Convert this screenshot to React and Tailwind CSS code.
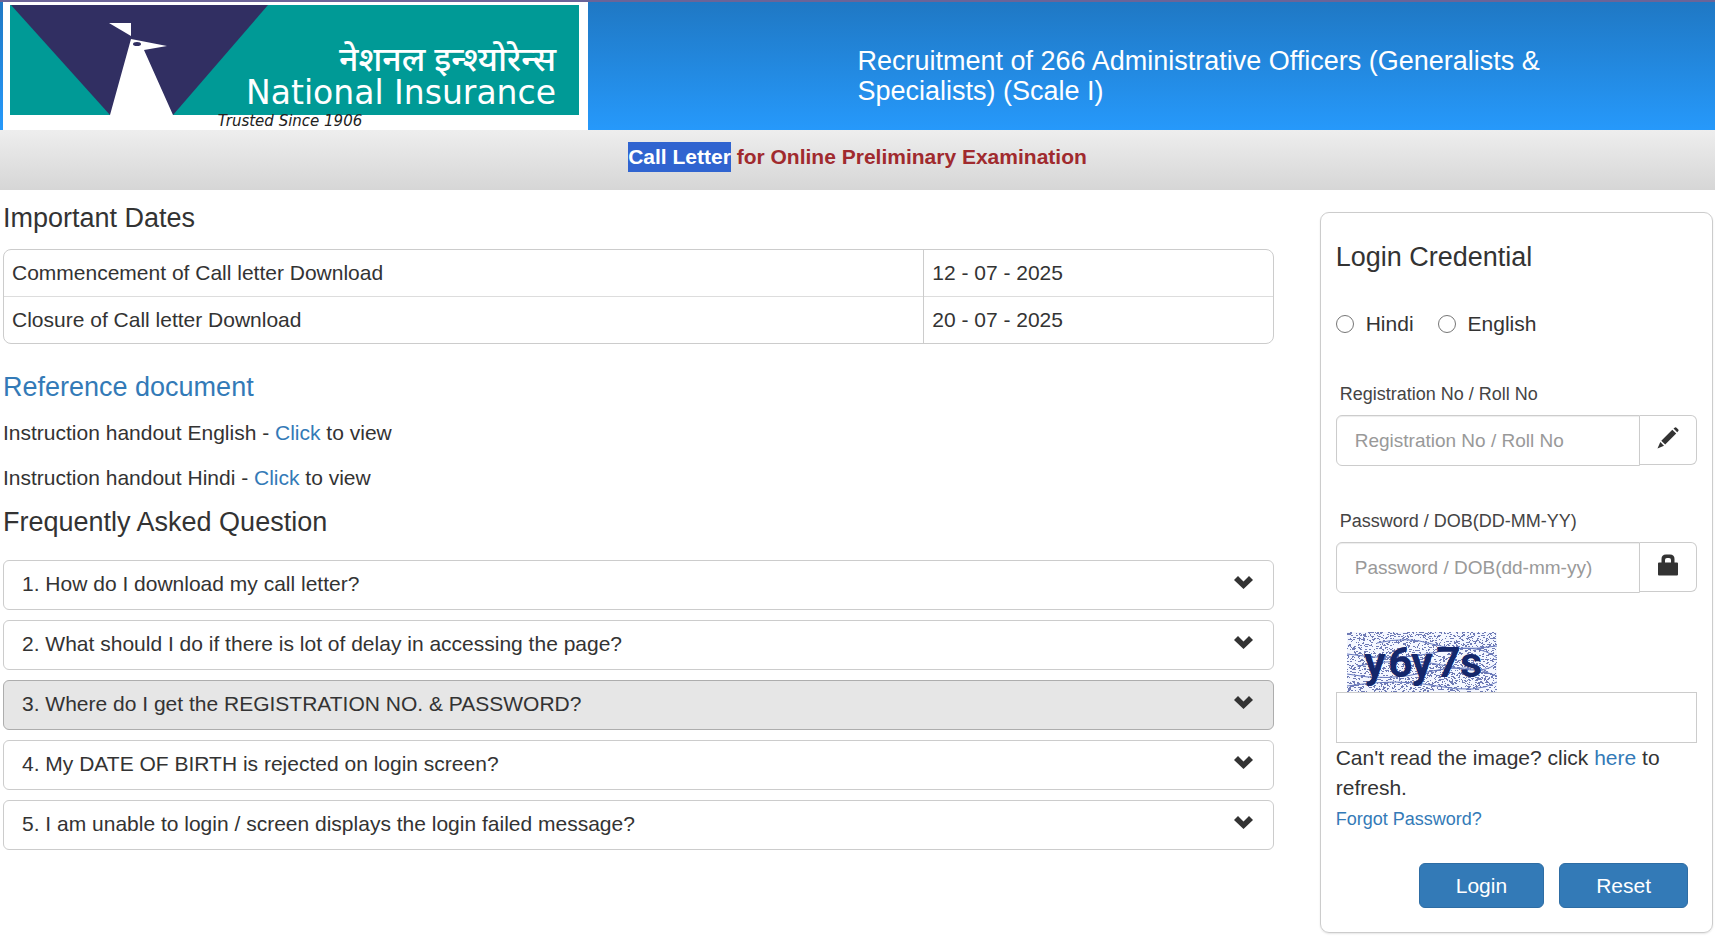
import React, { useState } from 'react';

const dates = [
  { label: 'Commencement of Call letter Download', value: '12 - 07 - 2025' },
  { label: 'Closure of Call letter Download', value: '20 - 07 - 2025' },
];

const handouts = ['English', 'Hindi'];

const questions = [
  'How do I download my call letter?',
  'What should I do if there is lot of delay in accessing the page?',
  'Where do I get the REGISTRATION NO. & PASSWORD?',
  'My DATE OF BIRTH is rejected on login screen?',
  'I am unable to login / screen displays the login failed message?',
];

// Speckles behind the captcha text, same pattern on every render
function makeSpeckles(count, width, height) {
  let seed = 7;
  const next = () => {
    seed = (seed * 16807) % 2147483647;
    return seed / 2147483647;
  };
  let d = '';
  for (let i = 0; i < count; i++) {
    const x = Math.floor(next() * width);
    const y = Math.floor(next() * height);
    const w = next() > 0.6 ? 2 : 1;
    d += `M${x} ${y}h${w}v1h-${w}z`;
  }
  return d;
}

const speckles = makeSpeckles(2100, 149, 60);

function Logo() {
  return (
    <svg viewBox="0 0 585 128" className="block w-[585px] h-[128px] bg-white" role="img" aria-label="National Insurance">
      <rect x="7" y="3" width="569" height="110" fill="#009a96" />
      <path d="M8 3H265L170 113H107Z" fill="#312f62" />
      {/* Pájaro */}
      <path d="M107 113L128 37L164 44L141 48L170 113V128H107Z" fill="#fff" />
      <path d="M106 21H128V34Z" fill="#fff" />
      <ellipse cx="134" cy="42" rx="4" ry="2" fill="#312f62" />
      <text x="553" y="69" textAnchor="end" fontSize="34" fontWeight="500" fill="#fff" fontFamily="'Noto Sans Devanagari', 'Noto Sans', sans-serif">
        नेशनल इन्श्योरेन्स
      </text>
      <text x="553" y="102" textAnchor="end" fontSize="33" fill="#fff" fontFamily="'DejaVu Sans', sans-serif">
        National Insurance
      </text>
      <text x="287" y="124" textAnchor="middle" fontSize="15" fontStyle="italic" fill="#222" fontFamily="'DejaVu Sans', sans-serif">
        Trusted Since 1906
      </text>
    </svg>
  );
}

function Captcha() {
  return (
    <svg viewBox="0 0 150 60" className="ml-[11px] block w-[150px] h-[60px]" role="img" aria-label="Captcha">
      <rect width="150" height="60" fill="#f4f7ff" />
      <path d={speckles} fill="#6f7bb5" />
      <g fill="none" stroke="#6577bd" strokeWidth="1">
        <path d="M30 11Q60 4 85 12T150 14" />
        <path d="M0 22Q50 30 90 20T150 26" />
        <path d="M10 34Q60 24 100 34T150 30" />
        <path d="M0 42Q40 50 80 40T150 44" />
        <path d="M0 54Q50 46 90 54T150 50" />
      </g>
      <text x="17 41 64 89 113" y="45" fontSize="43" fontWeight="700" fill="#14276b" fontFamily="Roboto, sans-serif">
        y6y7s
      </text>
    </svg>
  );
}

function ChevronIcon() {
  return (
    <svg viewBox="0 0 19 13" className="mb-1 w-[19px] h-[13px] shrink-0" fill="#333" aria-hidden="true">
      <path d="M0 4L4 0L9.500 5.500L15 0L19 4L9.500 13Z" />
    </svg>
  );
}

function PencilIcon() {
  return (
    <svg viewBox="0 0 22 22" className="w-[22px] h-[22px]" fill="#333" aria-hidden="true">
      <path d="M16.500 1.500L18 0.500Q18.800 0 19.500 0.700L21.300 2.500Q22 3.200 21.300 4L20.200 5.300Z" />
      <path d="M15.300 2.700L19.200 6.600L8.200 17.600L4.300 13.700Z" />
      <path d="M3.300 15L7 18.700L0.500 21.500Z" />
    </svg>
  );
}

function LockIcon() {
  return (
    <svg viewBox="0 0 20 22" className="w-[20px] h-[22px]" fill="#333" aria-hidden="true">
      <path fillRule="evenodd" d="M1 8.500H3.500V5Q3.500 0.500 8 0.500H12Q16.500 0.500 16.500 5V8.500H19Q20 8.500 20 9.500V20.500Q20 21.500 19 21.500H1Q0 21.500 0 20.500V9.500Q0 8.500 1 8.500ZM7 8.500H13V6Q13 4 11 4H9Q7 4 7 6Z" />
    </svg>
  );
}

function Field({ id, label, placeholder, type, icon }) {
  return (
    <div>
      <label htmlFor={id} className="block pl-1 text-[18px] leading-[26px] text-[#444]">
        {label}
      </label>
      <div className="mt-2 flex h-[51px]">
        <input
          id={id}
          type={type}
          placeholder={placeholder}
          className="min-w-0 flex-1 rounded-l-md border border-[#ccc] px-[18px] text-[19px] shadow-[inset_0_1px_1px_rgba(0,0,0,0.075)] placeholder:text-[#999]"
        />
        <span className="flex h-[50px] w-[57px] items-center justify-center rounded-r-md border border-l-0 border-[#ccc] pb-1">
          {icon}
        </span>
      </div>
    </div>
  );
}

function Header() {
  return (
    <header>
      <div className="grid grid-cols-2 border-t-2 border-[#6b6498] bg-linear-to-b from-[#1f78c4] to-[#2699fb]">
        <div className="pl-[3px]">
          <Logo />
        </div>
        <h1 className="self-center pt-5 pr-16 text-[27px] leading-[30px] text-white">
          Recruitment of 266 Administrative Officers (Generalists &amp; Specialists) (Scale I)
        </h1>
      </div>
      <div className="bg-linear-to-b from-[#eee] to-[#d6d6d6] pt-3 pb-[18px] text-center text-[21px] leading-[30px] font-bold text-[#a02a2e]">
        <span className="inline-block bg-[#3064d0] text-white">Call Letter</span> for Online Preliminary Examination
      </div>
    </header>
  );
}

function LoginPanel() {
  const [language, setLanguage] = useState('');

  return (
    <form
      onSubmit={(e) => e.preventDefault()}
      className="mt-[22px] w-[23%] shrink-0 rounded-[9px] border border-[#ccc] px-[15px] pt-[29px] pb-6 shadow-[0_1px_2px_rgba(0,0,0,0.1)]"
    >
      <h2 className="text-[27px] leading-[30px]">Login Credential</h2>

      <div className="mt-[37px] flex gap-6">
        {['Hindi', 'English'].map((name) => (
          <label key={name} className="flex items-center gap-3">
            <input
              type="radio"
              name="language"
              value={name}
              checked={language === name}
              onChange={() => setLanguage(name)}
              className="size-[18px] appearance-none rounded-full border border-[#767676] bg-white checked:border-[6px] checked:border-[#337ab7]"
            />
            {name}
          </label>
        ))}
      </div>

      <div className="mt-[42px] flex flex-col gap-[42px]">
        <Field id="regno" type="text" label="Registration No / Roll No" placeholder="Registration No / Roll No" icon={<PencilIcon />} />
        <Field id="password" type="password" label="Password / DOB(DD-MM-YY)" placeholder="Password / DOB(dd-mm-yy)" icon={<LockIcon />} />
      </div>

      <div className="mt-[39px]">
        <Captcha />
        <input type="text" aria-label="Captcha text" className="block h-[51px] w-full border border-[#ccc] px-[18px] text-[19px]" />
      </div>
      <p>
        Can't read the image? click <a href="#refresh" className="text-[#337ab7]">here</a> to refresh.
      </p>
      <a href="#forgot" className="text-[18px] text-[#337ab7]">Forgot Password?</a>

      <div className="mt-[29px] flex justify-end gap-[15px] pr-[9px]">
        <button type="submit" className="h-[45px] rounded-md border border-[#2e6da4] bg-[#337ab7] px-9 text-white">Login</button>
        <button type="reset" onClick={() => setLanguage('')} className="h-[45px] rounded-md border border-[#2e6da4] bg-[#337ab7] px-9 text-white">Reset</button>
      </div>
    </form>
  );
}

function App() {
  const [active, setActive] = useState(2);

  return (
    <div className="min-h-screen bg-white font-['Liberation_Sans',Arial,sans-serif] text-[21px] leading-[30px] text-[#333]">
      <Header />

      <main className="flex gap-[46px] pr-[2px] pb-2 pl-[3px]">
        <div className="min-w-0 flex-1">
          {/* Fechas */}
          <h2 className="mt-[13px] text-[27px] leading-[30px]">Important Dates</h2>
          <div className="mt-4 overflow-hidden rounded-lg border border-[#ccc]">
            <table className="w-full border-collapse">
              <tbody>
                {dates.map((row) => (
                  <tr key={row.label} className="border-t border-[#ddd] first:border-t-0">
                    <td className="px-2 py-2">{row.label}</td>
                    <td className="w-[349px] border-l border-[#ccc] px-2 py-2">{row.value}</td>
                  </tr>
                ))}
              </tbody>
            </table>
          </div>

          {/* Documentos */}
          <h2 className="mt-7 text-[27px] leading-[30px] text-[#337ab7]">Reference document</h2>
          <div className="mt-4 flex flex-col gap-[15px]">
            {handouts.map((name) => (
              <p key={name}>
                Instruction handout {name} - <a href={`#${name}`} className="text-[#337ab7]">Click</a> to view
              </p>
            ))}
          </div>

          {/* Preguntas */}
          <h2 className="mt-[14px] text-[27px] leading-[30px]">Frequently Asked Question</h2>
          <div className="mt-[23px] flex flex-col gap-[10px]">
            {questions.map((question, i) => (
              <button
                key={question}
                type="button"
                onClick={() => setActive(i)}
                className={
                  active === i
                    ? 'flex h-[50px] items-center justify-between rounded-md border border-[#adadad] bg-[#e6e6e6] pr-5 pb-[2px] pl-[18px] text-left'
                    : 'flex h-[50px] items-center justify-between rounded-md border border-[#ccc] bg-white pr-5 pb-[2px] pl-[18px] text-left'
                }
              >
                <span>{i + 1}. {question}</span>
                <ChevronIcon />
              </button>
            ))}
          </div>
        </div>

        <LoginPanel />
      </main>
    </div>
  );
}

export default App;
